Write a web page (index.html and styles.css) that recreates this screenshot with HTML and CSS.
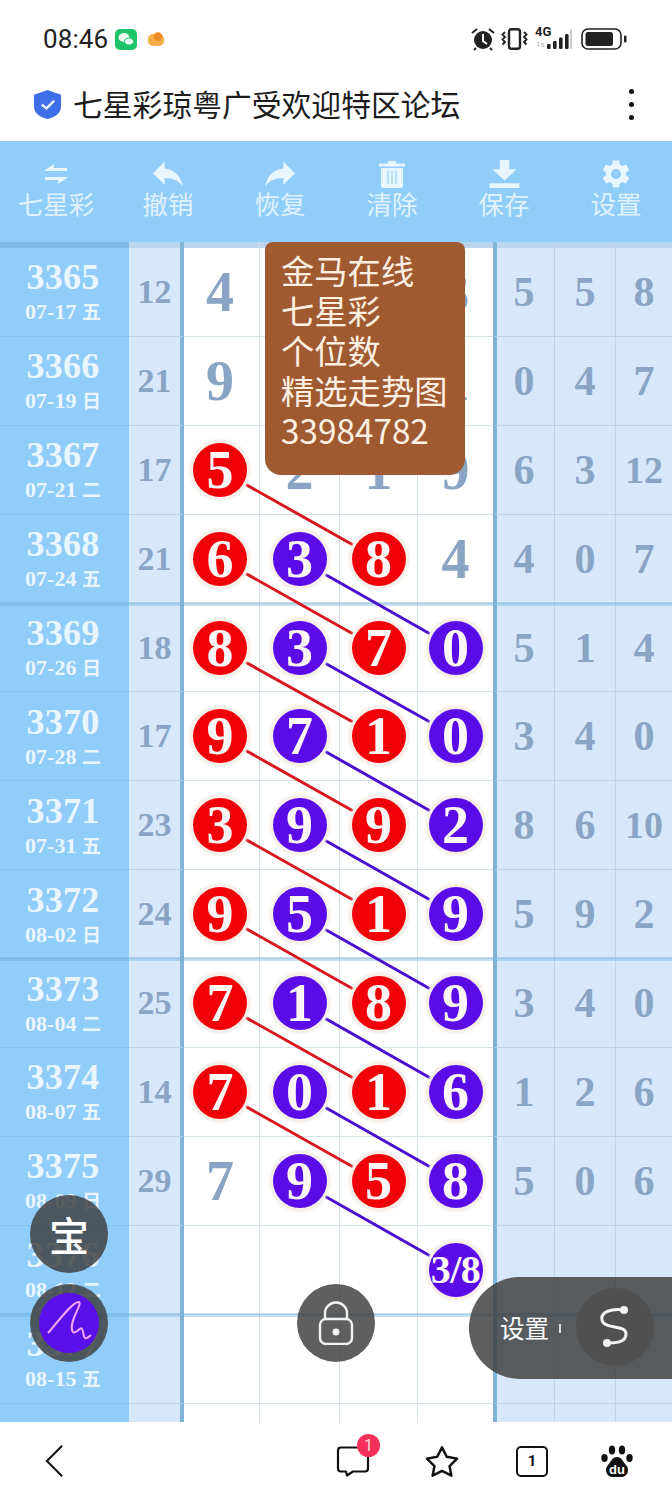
FILE: index.html
```html
<!DOCTYPE html>
<html lang="zh">
<head>
<meta charset="utf-8">
<title>七星彩琼粤广受欢迎特区论坛</title>
<link rel="stylesheet" href="styles.css">
</head>
<body>
<div class="page">
  <header class="status">
    <span class="time">08:46</span>
    <svg class="wechat" viewBox="0 0 22 21"><rect width="22" height="21" rx="5" fill="#1fc46a"/><ellipse cx="9" cy="8.500" rx="5.600" ry="4.400" fill="#eafaf1"/><ellipse cx="14" cy="12.500" rx="4.600" ry="3.600" fill="#eafaf1" stroke="#1fc46a"/></svg>
    <svg class="orange" viewBox="0 0 16 14"><rect y="2" width="16" height="12" rx="5" fill="#f8ae4a"/><circle cx="10" cy="4.500" r="4.200" fill="#f08a24"/></svg>
    <span class="spacer"></span>
    <svg class="alarm" viewBox="0 0 24 24"><circle cx="12" cy="13" r="9" fill="#222"/><path d="M12 7v7l4 3" stroke="#fff" stroke-width="2" fill="none"/><path d="M1 6l5-4M23 6l-5-4M5 21l-2 2M19 21l2 2" stroke="#222" stroke-width="2"/></svg>
    <svg class="vibrate" viewBox="0 0 27 22"><rect x="8" y="1.200" width="11" height="19.600" rx="2.500" fill="none" stroke="#222" stroke-width="2.400"/><path d="M4 4L1.500 6.500 4 9 1.500 11.500 4 14 1.500 16.500M23 4l2.500 2.500L23 9l2.500 2.500L23 14l2.500 2.500" fill="none" stroke="#222" stroke-width="1.900"/></svg>
    <div class="net"><span class="net-label">4G</span><span class="net-speed">1s</span><svg class="bars" viewBox="0 0 25 20"><rect x="0" y="15" width="3.600" height="5" rx="1.200" fill="#222"/><rect x="6" y="12" width="3.600" height="8" rx="1.200" fill="#222"/><rect x="12" y="8.500" width="3.600" height="11.500" rx="1.200" fill="#222"/><rect x="18" y="5" width="3.600" height="15" rx="1.200" fill="#222"/><rect x="23" y="0" width="2" height="20" fill="#ccc"/></svg></div>
    <svg class="battery" viewBox="0 0 46 22"><rect x="1" y="1" width="39" height="20" rx="6" fill="none" stroke="#222" stroke-width="1.600"/><rect x="4.500" y="4" width="27.500" height="14" rx="2.500" fill="#222"/><rect x="43" y="7.500" width="2.500" height="7" rx="1" fill="#222"/></svg>
  </header>

  <div class="titlebar">
    <svg class="shield" viewBox="0 0 30 30"><path d="M15 0l14 5v12c0 7-6 11-14 13C7 28 1 24 1 17V5z" fill="#3f6fe8"/><path d="M9 15l5 4 8-8" fill="none" stroke="#e8effd" stroke-width="2.500"/></svg>
    <h1 class="title">七星彩琼粤广受欢迎特区论坛</h1>
    <div class="dots"><i></i><i></i><i></i></div>
  </div>

  <nav class="toolbar">
    <div class="tool">
      <svg class="ico" viewBox="0 0 28 28"><path d="M3 10L12 4v4h13v3H3zM25 18l-9 6v-4H3v-3h22z" fill="#e8f6ff"/></svg>
      <span>七星彩</span>
    </div>
    <div class="tool">
      <svg class="ico arrow" viewBox="3 5 18 15"><path d="M10 9V5l-7 7 7 7v-4.100c5 0 8.500 1.600 11 5.100-1-5-4-10-11-11z" fill="#e8f6ff"/></svg>
      <span>撤销</span>
    </div>
    <div class="tool">
      <svg class="ico arrow" viewBox="3 5 18 15"><path d="M14 9V5l7 7-7 7v-4.100c-5 0-8.500 1.600-11 5.100 1-5 4-10 11-11z" fill="#e8f6ff"/></svg>
      <span>恢复</span>
    </div>
    <div class="tool">
      <svg class="ico" viewBox="0 0 28 28"><path d="M1 3.500h26v3H1zM10 1h8v3h-8zM3 8h22v17.500a2.500 2.500 0 0 1-2.500 2.500h-17A2.500 2.500 0 0 1 3 25.500z" fill="#e8f6ff"/><path d="M10 11v13M14 11v13M18 11v13" stroke="#a8d8fc" stroke-width="1.500"/></svg>
      <span>清除</span>
    </div>
    <div class="tool">
      <svg class="ico wide" viewBox="0 0 32 30"><path d="M11 0h10v10h8L16 22 3 10h8zM0 25h32v5H0z" fill="#e8f6ff"/></svg>
      <span>保存</span>
    </div>
    <div class="tool">
      <svg class="ico" viewBox="2 2 20 20"><path d="M19.140 12.940c.04-.3.060-.61.060-.94 0-.32-.02-.64-.07-.94l2.030-1.580a.49.49 0 0 0 .12-.61l-1.920-3.320a.49.49 0 0 0-.59-.22l-2.390.96a7 7 0 0 0-1.620-.94l-.36-2.540a.48.48 0 0 0-.48-.41h-3.840a.48.48 0 0 0-.47.410l-.36 2.540c-.59.24-1.130.57-1.620.94l-2.390-.96a.48.48 0 0 0-.59.22L2.740 8.870a.48.48 0 0 0 .12.610l2.030 1.580c-.05.3-.09.630-.09.940s.02.640.07.940l-2.030 1.580a.49.49 0 0 0-.12.610l1.920 3.320c.12.220.37.290.59.220l2.390-.96c.5.380 1.030.700 1.620.940l.36 2.540c.05.240.24.410.48.410h3.840c.24 0 .44-.17.47-.41l.36-2.540c.59-.24 1.130-.56 1.620-.94l2.390.96c.22.080.47 0 .59-.22l1.920-3.320a.48.48 0 0 0-.12-.61zM12 15.600a3.600 3.600 0 1 1 0-7.200 3.600 3.600 0 0 1 0 7.200z" fill="#e8f6ff"/></svg>
      <span>设置</span>
    </div>
  </nav>

  <main class="board">
    <div class="row strip"><div class="c-id"></div><div class="c-sum"></div><div class="c-a"></div><div class="c-b"></div><div class="c-b"></div><div class="c-d"></div><div class="c-r1"></div><div class="c-r2"></div><div class="c-r3"></div></div>

    <div class="row"><div class="c-id"><b class="issue">3365</b><span class="date">07-17 <em>五</em></span></div><div class="c-sum">12</div><div class="c-a">4</div><div class="c-b"></div><div class="c-b"></div><div class="c-d">3</div><div class="c-r1">5</div><div class="c-r2">5</div><div class="c-r3">8</div></div>
    <div class="row"><div class="c-id"><b class="issue">3366</b><span class="date">07-19 <em>日</em></span></div><div class="c-sum">21</div><div class="c-a">9</div><div class="c-b"></div><div class="c-b"></div><div class="c-d">1</div><div class="c-r1">0</div><div class="c-r2">4</div><div class="c-r3">7</div></div>
    <div class="row"><div class="c-id"><b class="issue">3367</b><span class="date">07-21 <em>二</em></span></div><div class="c-sum">17</div><div class="c-a"><b class="ball red">5</b></div><div class="c-b">2</div><div class="c-b">1</div><div class="c-d">9</div><div class="c-r1">6</div><div class="c-r2">3</div><div class="c-r3 tight">12</div></div>
    <div class="row thick"><div class="c-id"><b class="issue">3368</b><span class="date">07-24 <em>五</em></span></div><div class="c-sum">21</div><div class="c-a"><b class="ball red">6</b></div><div class="c-b"><b class="ball blue">3</b></div><div class="c-b"><b class="ball red">8</b></div><div class="c-d">4</div><div class="c-r1">4</div><div class="c-r2">0</div><div class="c-r3">7</div></div>
    <div class="row"><div class="c-id"><b class="issue">3369</b><span class="date">07-26 <em>日</em></span></div><div class="c-sum">18</div><div class="c-a"><b class="ball red">8</b></div><div class="c-b"><b class="ball blue">3</b></div><div class="c-b"><b class="ball red">7</b></div><div class="c-d"><b class="ball blue">0</b></div><div class="c-r1">5</div><div class="c-r2">1</div><div class="c-r3">4</div></div>
    <div class="row"><div class="c-id"><b class="issue">3370</b><span class="date">07-28 <em>二</em></span></div><div class="c-sum">17</div><div class="c-a"><b class="ball red">9</b></div><div class="c-b"><b class="ball blue">7</b></div><div class="c-b"><b class="ball red">1</b></div><div class="c-d"><b class="ball blue">0</b></div><div class="c-r1">3</div><div class="c-r2">4</div><div class="c-r3">0</div></div>
    <div class="row"><div class="c-id"><b class="issue">3371</b><span class="date">07-31 <em>五</em></span></div><div class="c-sum">23</div><div class="c-a"><b class="ball red">3</b></div><div class="c-b"><b class="ball blue">9</b></div><div class="c-b"><b class="ball red">9</b></div><div class="c-d"><b class="ball blue">2</b></div><div class="c-r1">8</div><div class="c-r2">6</div><div class="c-r3 tight">10</div></div>
    <div class="row thick"><div class="c-id"><b class="issue">3372</b><span class="date">08-02 <em>日</em></span></div><div class="c-sum">24</div><div class="c-a"><b class="ball red">9</b></div><div class="c-b"><b class="ball blue">5</b></div><div class="c-b"><b class="ball red">1</b></div><div class="c-d"><b class="ball blue">9</b></div><div class="c-r1">5</div><div class="c-r2">9</div><div class="c-r3">2</div></div>
    <div class="row"><div class="c-id"><b class="issue">3373</b><span class="date">08-04 <em>二</em></span></div><div class="c-sum">25</div><div class="c-a"><b class="ball red">7</b></div><div class="c-b"><b class="ball blue">1</b></div><div class="c-b"><b class="ball red">8</b></div><div class="c-d"><b class="ball blue">9</b></div><div class="c-r1">3</div><div class="c-r2">4</div><div class="c-r3">0</div></div>
    <div class="row"><div class="c-id"><b class="issue">3374</b><span class="date">08-07 <em>五</em></span></div><div class="c-sum">14</div><div class="c-a"><b class="ball red">7</b></div><div class="c-b"><b class="ball blue">0</b></div><div class="c-b"><b class="ball red">1</b></div><div class="c-d"><b class="ball blue">6</b></div><div class="c-r1">1</div><div class="c-r2">2</div><div class="c-r3">6</div></div>
    <div class="row"><div class="c-id"><b class="issue">3375</b><span class="date">08-09 <em>日</em></span></div><div class="c-sum">29</div><div class="c-a">7</div><div class="c-b"><b class="ball blue">9</b></div><div class="c-b"><b class="ball red">5</b></div><div class="c-d"><b class="ball blue">8</b></div><div class="c-r1">5</div><div class="c-r2">0</div><div class="c-r3">6</div></div>
    <div class="row thick"><div class="c-id"><b class="issue">3376</b><span class="date">08-12 <em>二</em></span></div><div class="c-sum"></div><div class="c-a"></div><div class="c-b"></div><div class="c-b"></div><div class="c-d"><b class="ball blue small">3/8</b></div><div class="c-r1"></div><div class="c-r2"></div><div class="c-r3"></div></div>
    <div class="row"><div class="c-id"><b class="issue">3377</b><span class="date">08-15 <em>五</em></span></div><div class="c-sum"></div><div class="c-a"></div><div class="c-b"></div><div class="c-b"></div><div class="c-d"></div><div class="c-r1"></div><div class="c-r2"></div><div class="c-r3"></div></div>
    <div class="row"><div class="c-id"></div><div class="c-sum"></div><div class="c-a"></div><div class="c-b"></div><div class="c-b"></div><div class="c-d"></div><div class="c-r1"></div><div class="c-r2"></div><div class="c-r3"></div></div>

    <svg class="links" viewBox="0 0 672 1180">
      <g class="link-red">
        <line x1="220" y1="228" x2="378" y2="317"/><line x1="220" y1="317" x2="378" y2="406"/><line x1="220" y1="406" x2="378" y2="494"/><line x1="220" y1="494" x2="378" y2="583"/>
        <line x1="220" y1="583" x2="378" y2="672"/><line x1="220" y1="672" x2="378" y2="761"/><line x1="220" y1="761" x2="378" y2="850"/><line x1="220" y1="850" x2="378" y2="939"/>
      </g>
      <g class="link-blue">
        <line x1="298" y1="317" x2="455" y2="406"/><line x1="298" y1="406" x2="455" y2="494"/><line x1="298" y1="494" x2="455" y2="583"/><line x1="298" y1="583" x2="455" y2="672"/>
        <line x1="298" y1="672" x2="455" y2="761"/><line x1="298" y1="761" x2="455" y2="850"/><line x1="298" y1="850" x2="455" y2="939"/><line x1="298" y1="939" x2="455" y2="1028"/>
      </g>
    </svg>

    <div class="notice">金马在线<br>七星彩<br>个位数<br>精选走势图<br>33984782</div>
  </main>

  <footer class="bottombar">
    <div class="back"><svg class="back-ico" viewBox="0 0 20 36"><path d="M18 2L2 18l16 16" fill="none" stroke="#111" stroke-width="2.200"/></svg></div>
    <div class="tab chat">
      <svg class="tab-ico" viewBox="0 0 34 32"><path d="M5 2h24a3 3 0 0 1 3 3v18a3 3 0 0 1-3 3H17l-6 4-1-4H5a3 3 0 0 1-3-3V5a3 3 0 0 1 3-3z" fill="none" stroke="#111" stroke-width="2.200" stroke-linejoin="round"/></svg>
      <span class="badge">1</span>
    </div>
    <div class="tab"><svg class="tab-ico" viewBox="0 0 36 34"><path d="M18 2l5 10 11 2-8 8 2 10-10-5-10 5 2-10-8-8 11-2z" fill="none" stroke="#111" stroke-width="2.600" stroke-linejoin="round"/></svg></div>
    <div class="tab"><span class="tabs-count">1</span></div>
    <div class="tab"><svg class="tab-ico" viewBox="0 0 32 33"><ellipse cx="3.500" cy="13" rx="3.200" ry="4" fill="#111"/><ellipse cx="11" cy="5" rx="3.200" ry="4.500" fill="#111"/><ellipse cx="21" cy="5" rx="3.200" ry="4.500" fill="#111"/><ellipse cx="28.500" cy="13" rx="3.200" ry="4" fill="#111"/><path d="M16 12c5 0 6 5 9 8 4 4 2 12-5 12h-8c-7 0-9-8-5-12 3-3 4-8 9-8z" fill="#111"/><text x="16" y="29" class="du">du</text></svg></div>
  </footer>

  <div class="fab treasure">宝</div>
  <div class="fab sign"><svg class="sign-ico" viewBox="0 0 60 60"><circle cx="30" cy="30" r="30" fill="#5a10e8"/><path d="M9 40C18 30 34 8 40 9c4 2-12 22-6 30 3 3 7-6 9-3 2 3 1 8 3 9 2 1 4-1 6-3" fill="none" stroke="#f3a4f5" stroke-width="2"/></svg></div>
  <div class="fab lock"><svg class="lock-ico" viewBox="0 0 36 44"><rect x="2" y="18" width="32" height="25" rx="6" fill="none" stroke="#f2f2f2" stroke-width="2.400"/><path d="M7 18V12a11 10.500 0 0 1 22 0v6" fill="none" stroke="#f2f2f2" stroke-width="2.400"/><circle cx="18" cy="31" r="3.500" fill="#f2f2f2"/></svg></div>
  <div class="pill">
    <span class="pill-label">设置</span>
    <i class="pill-tick"></i>
    <div class="pill-btn"><svg class="s-ico" viewBox="0 0 78 78"><path d="M48 22C36 20 24 24 26 32 28 42 50 36 50 46 50 55 38 55 31 55" fill="none" stroke="#f4f4f4" stroke-width="3"/><circle cx="48" cy="22" r="4" fill="#f4f4f4"/><circle cx="31" cy="55" r="4" fill="#f4f4f4"/></svg></div>
  </div>
</div>
</body>
</html>
```
FILE: styles.css
```css
* { box-sizing: border-box; }
html, body { margin: 0; padding: 0; }
body { background: #fff; font-family: "Noto Sans CJK SC", "Noto Sans", sans-serif; }
.page { position: relative; width: 672px; height: 1500px; display: flex; flex-direction: column; overflow: hidden; }

/* status bar */
.status { height: 70px; flex: none; display: flex; align-items: center; padding: 8px 45px 0 43px; color: #222; }
.time { font: 400 26px Roboto, sans-serif; width: 72px; letter-spacing: .1px; }
.wechat { width: 22px; height: 21px; }
.orange { width: 16px; height: 14px; margin-left: 11px; }
.spacer { flex: 1; }
.alarm { width: 24px; height: 24px; }
.vibrate { width: 27px; height: 22px; margin-left: 6px; }
.net { position: relative; width: 37px; height: 22px; margin-left: 7px; }
.net-label { position: absolute; left: 0; top: -3px; font: 700 13px/14px Roboto, sans-serif; color: #222; }
.net-speed { position: absolute; left: 1px; top: 12px; font: 400 8px/10px Roboto, sans-serif; color: #aaa; }
.bars { position: absolute; right: 0; bottom: 1px; width: 25px; height: 20px; }
.battery { width: 46px; height: 22px; margin-left: 9px; }

/* title bar */
.titlebar { height: 71px; flex: none; display: flex; align-items: center; padding: 0 0 2px 33px; background: #fff; }
.shield { width: 29px; height: 29px; }
.title { margin: 0 0 0 11px; padding-bottom: 4px; font-size: 29.800px; font-weight: 400; color: #1c1c1c; line-height: 40px; white-space: nowrap; }
.dots { margin-left: auto; margin-right: 38px; display: flex; flex-direction: column; gap: 7.500px; }
.dots i { display: block; width: 5.500px; height: 5.500px; border-radius: 50%; background: #111; }

/* toolbar */
.toolbar { height: 101px; flex: none; display: grid; grid-template-columns: repeat(6, 112px); background: #90cdfb; }
.tool { display: flex; flex-direction: column; align-items: center; padding-top: 19px; color: #e0f2ff; font-size: 25.500px; }
.tool span { line-height: 30px; }
.ico { width: 28px; height: 28px; display: block; }
.ico.wide { width: 33px; }
.ico.arrow { width: 30px; }

/* board */
.board { position: relative; flex: 1; overflow: hidden; background: #fff; }
.row { position: relative; display: grid; grid-template-columns: 129px 55px 75px 80px 78px 76px 61px 61px 57px; height: 88.900px; font-family: "Liberation Serif", serif; font-weight: 700; color: #8aa4c4; }
.row > div { display: flex; align-items: center; justify-content: center; border-bottom: 1px solid #d3e2e8; min-width: 0; }
.row.strip { height: 6px; }
.strip > div { border-bottom: 0; }
.strip .c-id { background: #7fb9e6; }
.strip .c-sum, .strip .c-r1, .strip .c-r2, .strip .c-r3, .strip .c-a, .strip .c-b, .strip .c-d { background: #b9d7ee; }
.thick::after { content: ""; position: absolute; z-index: 1; left: 0; right: 0; bottom: -2px; height: 4px; background: rgba(100, 170, 215, .36); }
.c-id { flex-direction: column; padding-right: 3px; background: #90cdfb; color: #eaf6ff; border-bottom-color: #88c4f2 !important; }
.issue { font-size: 36px; line-height: 40px; letter-spacing: .2px; }
.date { font-size: 22px; line-height: 28px; }
.date em { font: 700 19px "Noto Sans CJK SC", sans-serif; }
.c-sum { background: #d6e8fa; font-size: 34px; border-right: 4px solid #7fb4d6; border-bottom-color: #bed4e9 !important; }
.c-a { font-size: 56px; padding-right: 3px; }
.c-b, .c-d { font-size: 56px; border-left: 1px solid #d3e2e8; }
.c-r1, .c-r2, .c-r3 { background: #d6e8fa; font-size: 42px; border-bottom-color: #bed4e9 !important; }
.c-r1 { border-left: 4px solid #7fb4d6; padding-right: 3px; }
.c-r2, .c-r3 { border-left: 1px solid #bed4e9; }
.tight { font-size: 38px; }

.ball { position: relative; z-index: 2; width: 54px; height: 54px; border-radius: 50%; display: flex; align-items: center; justify-content: center; font-size: 54px; line-height: 1; color: #fdf6f6; box-shadow: 0 0 0 3px #f6efea, 0 0 2px 4px rgba(240, 235, 225, .6); }
.red { background: #f20008; }
.blue { background: #5a0be8; }
.small { font-size: 40px; letter-spacing: -.5px; }

.links { position: absolute; left: 0; top: 0; width: 672px; height: 1180px; z-index: 1; }
.links line { stroke-width: 3px; }
.link-red { stroke: #d81820; }
.link-blue { stroke: #4a10d0; }

.notice { position: absolute; z-index: 3; left: 265px; top: 0; width: 200px; height: 233px; padding: 8px 0 0 16px; background: #a05a32; color: #fdf0e0; border-radius: 8px 8px 16px 16px; font: 400 33.300px/40px "Noto Sans CJK SC", sans-serif; }

/* bottom bar */
.bottombar { height: 78px; flex: none; display: grid; grid-template-columns: 309px 88px 90px 90px 80px; align-items: center; background: #fff; }
.back { padding-left: 45px; display: flex; }
.back-ico { width: 19px; height: 36px; }
.tab { position: relative; display: flex; justify-content: center; align-items: center; }
.tab-ico { width: 34px; height: 33px; }
.tabs-count { width: 32px; height: 31px; display: flex; align-items: center; justify-content: center; border: 2.200px solid #111; border-radius: 5px; font: 700 15px Roboto, sans-serif; color: #111; }
.badge { position: absolute; left: 48px; top: -11px; width: 23px; height: 23px; border-radius: 50%; background: #f2305a; color: #ffd6de; font: 400 16px/23px Roboto, sans-serif; text-align: center; }
.du { font: 700 13px "Liberation Sans", sans-serif; fill: #fff; text-anchor: middle; }

/* floating */
.fab { position: absolute; z-index: 5; width: 78px; height: 78px; border-radius: 50%; display: flex; align-items: center; justify-content: center; background: rgba(60, 60, 60, .82); }
.treasure { left: 30px; top: 1195px; color: #fff; font-size: 40px; font-weight: 500; }
.sign { left: 30px; top: 1284px; }
.sign-ico { width: 60px; height: 60px; }
.lock { left: 297px; top: 1284px; }
.lock-ico { width: 36px; height: 44px; }
.pill { position: absolute; z-index: 5; left: 469px; top: 1277px; width: 203px; height: 102px; border-radius: 51px 0 0 51px; background: rgba(60, 60, 60, .82); display: flex; align-items: center; padding-left: 31px; color: #fff; }
.pill-label { font-size: 24.500px; line-height: 30px; }
.pill-tick { width: 1.500px; height: 9px; margin-left: 10px; background: #ddd; }
.pill-btn { width: 78px; height: 78px; margin-left: 15px; margin-top: -2px; border-radius: 50%; background: #505050; }
.s-ico { width: 78px; height: 78px; display: block; }
```
